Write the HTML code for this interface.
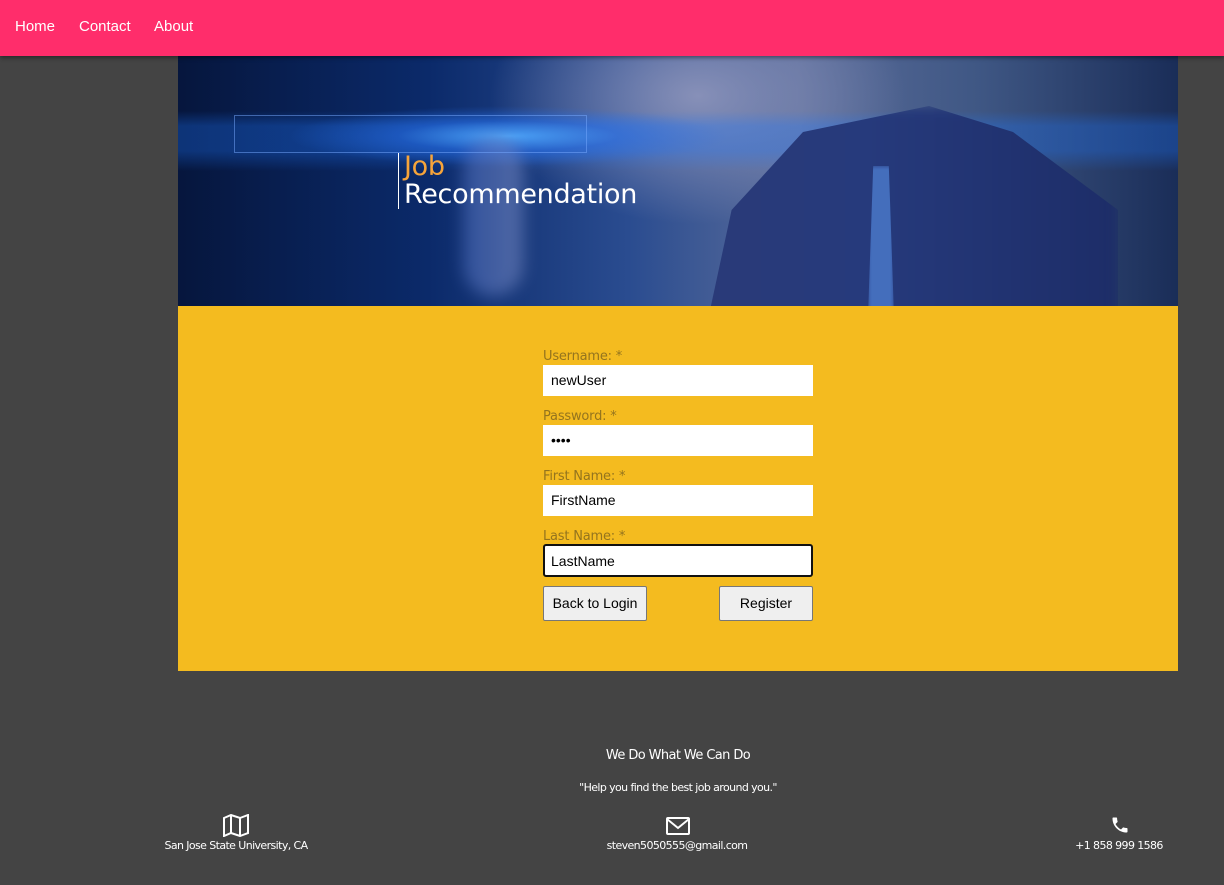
<!DOCTYPE html>
<html><head><meta charset="utf-8">
<style>
*{box-sizing:border-box;margin:0;padding:0}
body{width:1224px;height:885px;background:#444;font-family:"Liberation Sans",sans-serif;position:relative;overflow:hidden}
nav{position:absolute;left:0;top:0;width:1224px;height:56px;background:#ff2d6b;box-shadow:0 2px 4px rgba(0,0,0,.4);z-index:2}
nav a{position:absolute;top:18px;color:#fff;font-size:15px;text-decoration:none}
.hero{position:absolute;left:178px;top:56px;width:1000px;height:250px;overflow:hidden;
background:
radial-gradient(ellipse 220px 30px at 330px 80px,rgba(80,170,255,.9),rgba(40,110,230,.5) 50%,transparent 100%),
linear-gradient(180deg,transparent 55px,rgba(30,120,255,.3) 70px,rgba(30,120,255,.3) 95px,transparent 115px),
radial-gradient(ellipse 260px 160px at 520px 40px,#8790b8,transparent 80%),
linear-gradient(90deg,#06163d 0,#0b2a6a 25%,#2a4c90 45%,#5a6c9a 62%,#3f5784 80%,#1a2d58 100%)}
.suit{position:absolute;left:520px;top:50px;width:420px;height:260px;background:linear-gradient(90deg,#2a3a78,#263a7c 40%,#1d2d68);clip-path:polygon(25% 10%,55% 0,75% 10%,100% 40%,100% 100%,0 100%,8% 40%);filter:blur(6px)}
.tie{position:absolute;left:690px;top:110px;width:26px;height:150px;background:#4a78c8;clip-path:polygon(20% 0,80% 0,100% 100%,0 100%);filter:blur(2px);opacity:.85}
.hand{position:absolute;left:285px;top:80px;width:60px;height:160px;background:linear-gradient(90deg,#4d6ec0,#7f90c8);border-radius:40px;opacity:.55;filter:blur(8px)}
.sbox{position:absolute;left:56px;top:59px;width:353px;height:38px;border:1px solid rgba(120,170,255,.5)}
.title{position:absolute;left:220px;top:97px;border-left:1px solid #fff;padding-left:5px;font-family:"DejaVu Sans",sans-serif;font-size:27px;line-height:28px;color:#fff;letter-spacing:-.3px}
.title span{color:#f7a43a}
.form{position:absolute;left:178px;top:306px;width:1000px;height:365px;background:#f4bb1f}
label{position:absolute;left:365px;font-family:"DejaVu Sans",sans-serif;font-size:13px;color:#94741e;letter-spacing:-.2px}
.inp{position:absolute;left:365px;width:270px;height:31px;background:#fff;font-size:14px;padding:7px 0 0 8px;color:#000}
.btn{position:absolute;top:280px;height:35px;background:#efefef;border:1px solid #777;border-radius:2px;font-size:14px;text-align:center;line-height:33px;color:#000}
.f{position:absolute;color:#fff;font-family:"DejaVu Sans",sans-serif;text-align:center;letter-spacing:-.6px}
</style></head><body>
<nav><a style="left:15px">Home</a><a style="left:79px">Contact</a><a style="left:154px">About</a></nav>
<div class="hero"><div class="suit"></div><div class="tie"></div><div class="hand"></div><div class="sbox"></div>
<div class="title"><span>Job</span><br>Recommendation</div></div>
<div class="form">
<label style="top:43px">Username: *</label><div class="inp" style="top:59px">newUser</div>
<label style="top:103px">Password: *</label><div class="inp" style="top:119px">••••</div>
<label style="top:163px">First Name: *</label><div class="inp" style="top:179px">FirstName</div>
<label style="top:223px">Last Name: *</label><div class="inp" style="top:238px;border:2px solid #111;border-radius:3px;padding-left:6px;height:33px">LastName</div>
<div class="btn" style="left:365px;width:104px">Back to Login</div>
<div class="btn" style="left:541px;width:94px">Register</div>
</div>
<div class="f" style="left:0;width:1356px;top:748px;font-size:13px">We Do What We Can Do</div>
<div class="f" style="left:0;width:1356px;top:781px;font-size:11px">"Help you find the best job around you."</div>
<svg style="position:absolute;left:222px;top:814px" width="28" height="23" viewBox="0 0 28 23" fill="none" stroke="#fff" stroke-width="2"><path d="M2 4 L9 1 L18 4 L26 1 V19 L18 22 L9 19 L2 22 Z M9 1 V19 M18 4 V22"/></svg>
<div class="f" style="left:136px;width:200px;top:839px;font-size:11px">San Jose State University, CA</div>
<svg style="position:absolute;left:666px;top:817px" width="24" height="18" viewBox="0 0 24 18" fill="none" stroke="#fff" stroke-width="2"><rect x="1" y="1" width="22" height="16" rx="1"/><path d="M1 2 L12 11 L23 2"/></svg>
<div class="f" style="left:577px;width:200px;top:839px;font-size:11px">steven5050555@gmail.com</div>
<svg style="position:absolute;left:1110px;top:815px" width="20" height="20" viewBox="0 0 24 24"><path fill="#fff" d="M6.6 10.8c1.4 2.8 3.8 5.1 6.6 6.6l2.2-2.2c.3-.3.7-.4 1-.2 1.1.4 2.3.6 3.6.6.6 0 1 .4 1 1V20c0 .6-.4 1-1 1C10.6 21 3 13.4 3 4c0-.6.4-1 1-1h3.5c.6 0 1 .4 1 1 0 1.3.2 2.5.6 3.6.1.3 0 .7-.2 1z"/></svg>
<div class="f" style="left:1019px;width:200px;top:839px;font-size:11px">+1 858 999 1586</div>
</body></html>
